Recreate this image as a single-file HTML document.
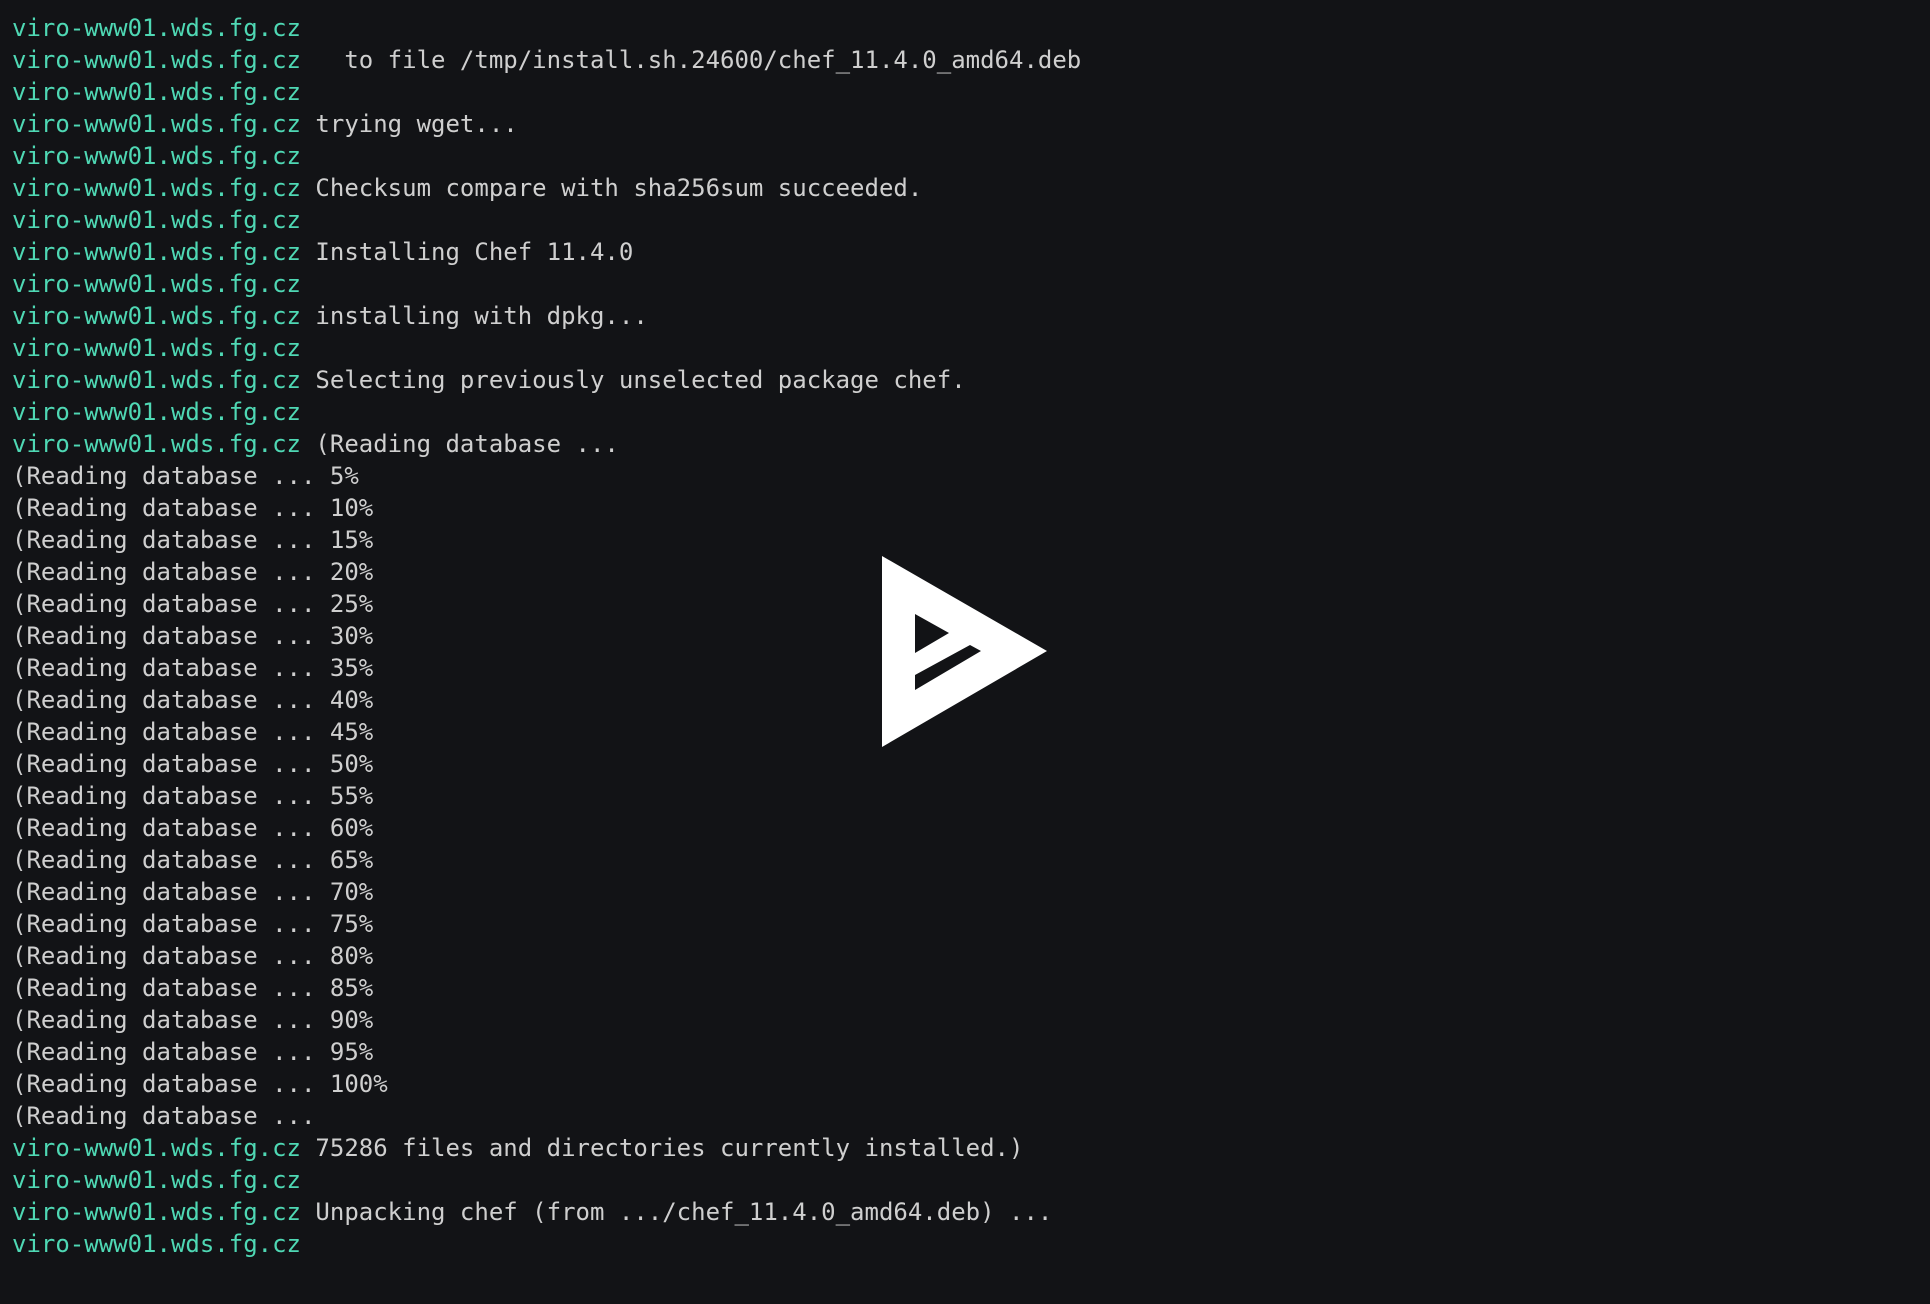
<!DOCTYPE html>
<html><head><meta charset="utf-8"><style>
html,body{margin:0;padding:0;background:#121316;width:1930px;height:1304px;overflow:hidden}
pre{margin:0;position:absolute;left:12px;top:12px;font-family:"DejaVu Sans Mono","Liberation Mono",monospace;font-size:24px;line-height:32px;color:#cfcfcf;white-space:pre}
.g{color:#4fd8b4}
svg{position:absolute;left:0;top:0}
</style></head><body>
<pre><span class="g">viro-www01.wds.fg.cz</span>
<span class="g">viro-www01.wds.fg.cz</span>   to file /tmp/install.sh.24600/chef_11.4.0_amd64.deb
<span class="g">viro-www01.wds.fg.cz</span>
<span class="g">viro-www01.wds.fg.cz</span> trying wget...
<span class="g">viro-www01.wds.fg.cz</span>
<span class="g">viro-www01.wds.fg.cz</span> Checksum compare with sha256sum succeeded.
<span class="g">viro-www01.wds.fg.cz</span>
<span class="g">viro-www01.wds.fg.cz</span> Installing Chef 11.4.0
<span class="g">viro-www01.wds.fg.cz</span>
<span class="g">viro-www01.wds.fg.cz</span> installing with dpkg...
<span class="g">viro-www01.wds.fg.cz</span>
<span class="g">viro-www01.wds.fg.cz</span> Selecting previously unselected package chef.
<span class="g">viro-www01.wds.fg.cz</span>
<span class="g">viro-www01.wds.fg.cz</span> (Reading database ...
(Reading database ... 5%
(Reading database ... 10%
(Reading database ... 15%
(Reading database ... 20%
(Reading database ... 25%
(Reading database ... 30%
(Reading database ... 35%
(Reading database ... 40%
(Reading database ... 45%
(Reading database ... 50%
(Reading database ... 55%
(Reading database ... 60%
(Reading database ... 65%
(Reading database ... 70%
(Reading database ... 75%
(Reading database ... 80%
(Reading database ... 85%
(Reading database ... 90%
(Reading database ... 95%
(Reading database ... 100%
(Reading database ...
<span class="g">viro-www01.wds.fg.cz</span> 75286 files and directories currently installed.)
<span class="g">viro-www01.wds.fg.cz</span>
<span class="g">viro-www01.wds.fg.cz</span> Unpacking chef (from .../chef_11.4.0_amd64.deb) ...
<span class="g">viro-www01.wds.fg.cz</span></pre>
<svg width="1930" height="1304">
<path d="M882 556 L1047 651 L882 747 Z M915 614 L915 653 L949 633 Z M915 675 L915 690 L981 651 L970 645 Z" fill="#fff" fill-rule="evenodd"/>
</svg>
</body></html>
